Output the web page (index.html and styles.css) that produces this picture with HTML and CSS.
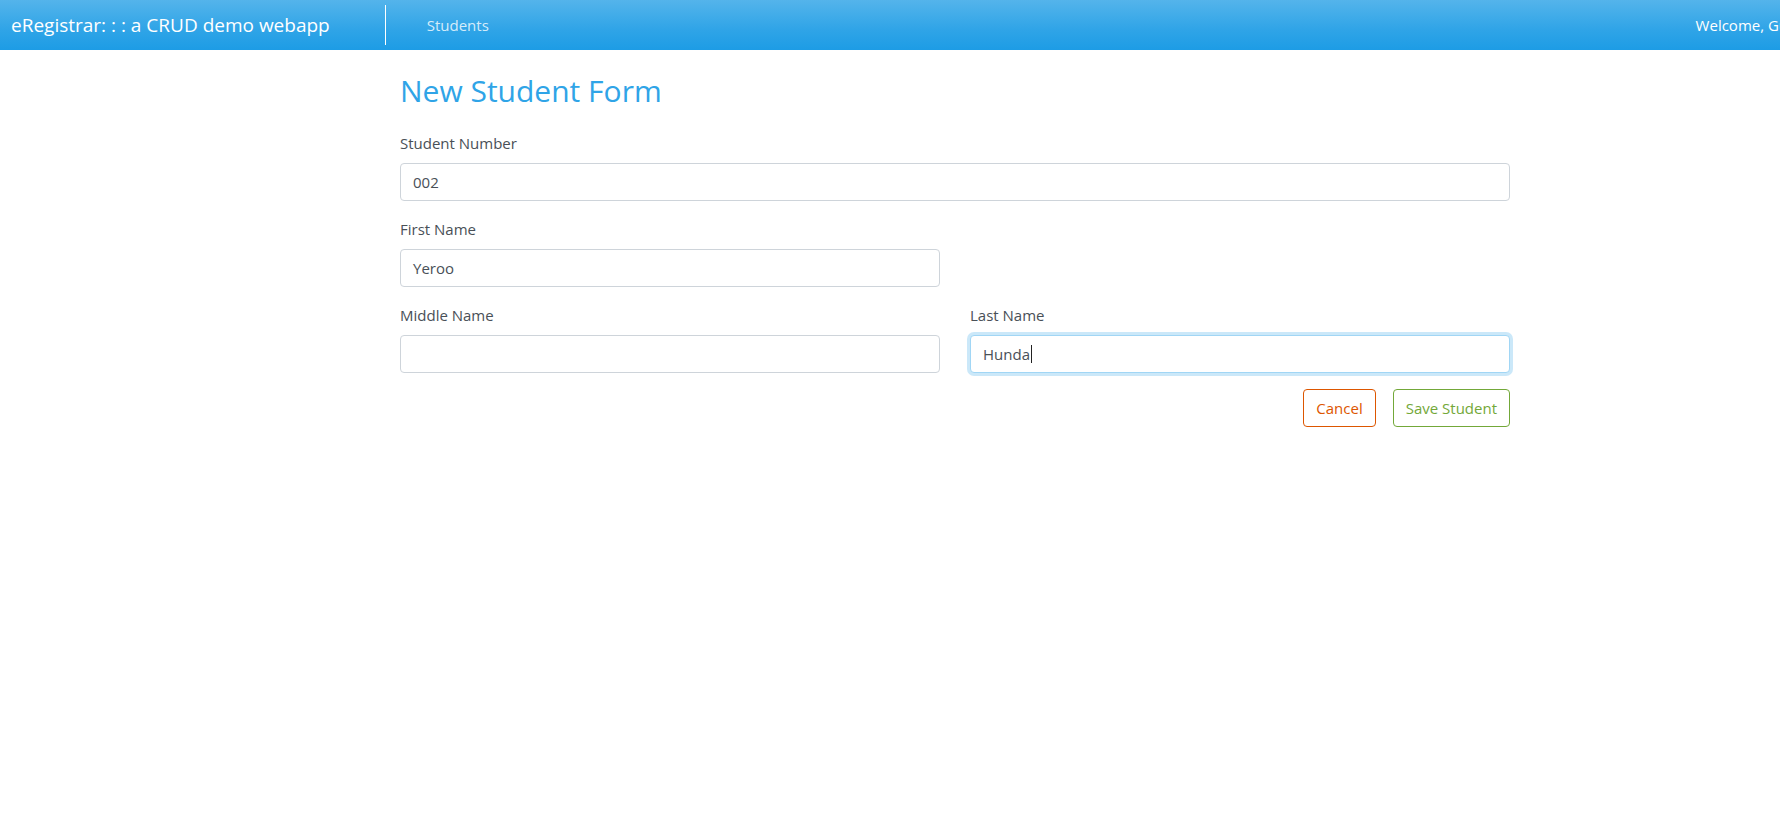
FILE: index.html
```html
<!DOCTYPE html>
<html lang="en">
<head>
<meta charset="utf-8">
<title>eRegistrar - New Student</title>
<link rel="stylesheet" href="styles.css">
</head>
<body>
<div class="page">
  <nav class="navbar">
    <a class="brand" href="#">eRegistrar: : : a CRUD demo webapp</a>
    <ul class="nav">
      <li><a class="nav-link" href="#">Students</a></li>
    </ul>
    <div class="welcome">Welcome, Guest</div>
  </nav>
  <main class="container">
    <h2 class="title">New Student Form</h2>
    <form class="form">
      <div class="form-group">
        <label class="label">Student Number</label>
        <div class="input">002</div>
      </div>
      <div class="row">
        <div class="form-group col">
          <label class="label">First Name</label>
          <div class="input">Yeroo</div>
        </div>
        <div class="col"></div>
      </div>
      <div class="row">
        <div class="form-group col">
          <label class="label">Middle Name</label>
          <div class="input"></div>
        </div>
        <div class="form-group col">
          <label class="label">Last Name</label>
          <div class="input focused">Hunda<span class="caret"></span></div>
        </div>
      </div>
      <div class="actions">
        <button type="button" class="btn btn-cancel">Cancel</button>
        <button type="button" class="btn btn-save">Save Student</button>
      </div>
    </form>
  </main>
</div>
</body>
</html>
```

FILE: styles.css
```css
html, body {
  margin: 0;
  padding: 0;
  overflow: hidden;
  background: #fff;
}
body {
  font-family: "Open Sans", "Noto Sans", sans-serif;
  font-size: 16px;
  line-height: 1.5;
  color: #495057;
}
.page {
  width: 1910px;
}
.navbar {
  height: 50px;
  box-sizing: border-box;
  display: flex;
  align-items: center;
  padding: 0 101px 0 11px;
  background-image: linear-gradient(#54b4eb, #2fa4e7 60%, #1d9ce5);
}
.brand {
  font-size: 19px;
  line-height: 30px;
  color: #fff;
  text-decoration: none;
  white-space: nowrap;
  margin-right: 55px;
}
.nav {
  list-style: none;
  margin: 0;
  padding: 0 0 0 41px;
  height: 40px;
  display: flex;
  align-items: center;
  border-left: 1px solid #fff;
}
.nav-link {
  color: rgba(255, 255, 255, 0.8);
  text-decoration: none;
  font-size: 15px;
}
.welcome {
  margin-left: auto;
  color: #fff;
  font-size: 15px;
  white-space: nowrap;
}
.container {
  width: 1110px;
  margin: 0 auto;
  padding-top: 22px;
}
.title {
  margin: 0 0 21px;
  font-size: 30px;
  font-weight: 400;
  line-height: 38px;
  color: #2fa4e7;
}
.form-group {
  margin-bottom: 16px;
}
.label {
  display: block;
  margin-bottom: 8px;
  font-size: 15px;
  line-height: 24px;
}
.input {
  box-sizing: border-box;
  height: 38px;
  padding: 6px 12px;
  font-size: 15px;
  line-height: 24px;
  color: #495057;
  background: #fff;
  border: 1px solid #ced4da;
  border-radius: 4px;
}
.input.focused {
  border-color: #a1d6f5;
  box-shadow: 0 0 0 3px rgba(47, 164, 231, 0.25);
}
.caret {
  display: inline-block;
  width: 1px;
  height: 18px;
  background: #222;
  vertical-align: -3px;
  margin-left: 1px;
}
.row {
  display: flex;
  gap: 30px;
}
.col {
  flex: 1 1 0;
}
.actions {
  display: flex;
  justify-content: flex-end;
  gap: 17px;
}
.btn {
  box-sizing: border-box;
  height: 38px;
  padding: 6px 12px;
  font-family: inherit;
  font-size: 15px;
  line-height: 24px;
  background: transparent;
  border: 1px solid;
  border-radius: 4px;
  cursor: pointer;
}
.btn-cancel {
  color: #dd5600;
  border-color: #dd5600;
}
.btn-save {
  color: #73a839;
  border-color: #73a839;
}
```
